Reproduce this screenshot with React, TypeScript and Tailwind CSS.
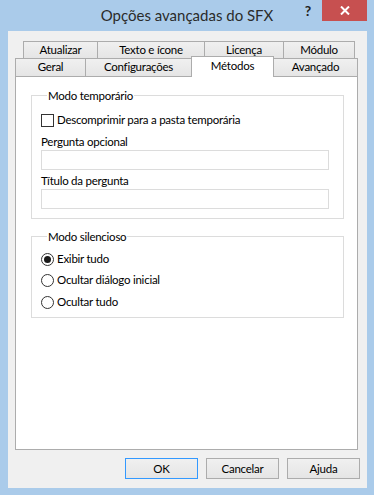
import React from 'react';

const tabBase =
  "h-full flex items-center justify-center border-t border-l border-r border-[#acacac] bg-linear-to-b from-[#f0f0f0] to-[#e5e5e5]";

function Tab({ label, w, first }: { label: string; w: string; first?: boolean }) {
  return (
    <div className={`${tabBase} ${w} ${first ? '' : '-ml-px'}`}>
      <span className="leading-none pb-px">{label}</span>
    </div>
  );
}

function Group({ title, children, className }: { title: string; children: React.ReactNode; className?: string }) {
  return (
    <div className={`border border-[#dcdcdc] ${className ?? ''}`}>
      <div className="-mt-[8px] ml-[6px] w-fit px-px bg-white leading-[16px]">{title}</div>
      {children}
    </div>
  );
}

function Radio({ label, checked, className }: { label: string; checked?: boolean; className?: string }) {
  return (
    <div className={`flex items-center h-[16px] gap-[3px] ${className ?? ''}`}>
      <span className="w-[13px] h-[13px] rounded-full border border-[#333] bg-white flex items-center justify-center">
        {checked && <span className="w-[7px] h-[7px] rounded-full bg-[#1a1a1a]" />}
      </span>
      <span>{label}</span>
    </div>
  );
}

function Btn({ label, primary }: { label: string; primary?: boolean }) {
  return (
    <div
      className={`w-[73px] h-[21px] flex items-center justify-center border bg-linear-to-b from-[#f0f0f0] to-[#e5e5e5] ${
        primary ? 'border-[#3399ff]' : 'border-[#acacac]'
      }`}
    >
      {label}
    </div>
  );
}

export default function App() {
  return (
    <div className="w-[374px] h-[495px] bg-[#aacbea] flex flex-col font-['Lato',sans-serif] text-[11.5px] tracking-[-0.25px] text-black">
      {/* title bar */}
      <div className="h-[31px] grid grid-cols-[1fr_auto_1fr]">
        <div />
        <div className="pt-[5px] text-[15px] tracking-normal leading-[20px] text-[#2b2b2b]">Opções avançadas do SFX</div>
        <div className="flex justify-end items-start pr-[7px]">
          <span className="mt-[3px] mr-[11px] text-[14px] font-bold leading-[16px] text-[#222]">?</span>
          <div className="w-[45px] h-[21px] bg-[#c75050] flex items-center justify-center">
            <svg width="10" height="9" viewBox="0 0 10 9">
              <path d="M1 0.5 L9 8.5 M9 0.5 L1 8.5" stroke="#fff" strokeWidth="2" />
            </svg>
          </div>
        </div>
      </div>

      {/* client area */}
      <div className="ml-[8px] w-[359px] h-[457px] bg-[#f0f0f0] flex flex-col">
        <div className="pt-[10px]">
          <div className="flex h-[17px] ml-[15px]">
            <Tab label="Atualizar" w="w-[75px]" first />
            <Tab label="Texto e ícone" w="w-[108px]" />
            <Tab label="Licença" w="w-[80px]" />
            <Tab label="Módulo" w="w-[72px]" />
          </div>
          <div className="flex h-[18px] ml-[7px]">
            <Tab label="Geral" w="w-[71px]" first />
            <Tab label="Configurações" w="w-[107px]" />
            <div className="relative z-10 -ml-px -mt-[2px] h-[21px] w-[83px] bg-white border-t border-l border-r border-[#acacac] flex items-start justify-center pt-[2px]">
              <span className="leading-[14px]">Métodos</span>
            </div>
            <Tab label="Avançado" w="w-[85px]" />
          </div>
        </div>

        {/* tab page */}
        <div className="ml-[7px] w-[343px] h-[374px] bg-white border border-[#acacac] pt-[18px] pl-[15px]">
          <Group title="Modo temporário" className="w-[313px] pl-[9px] pb-[9px]">
            <div className="mt-[8px] flex items-center h-[16px] gap-[3px]">
              <span className="w-[13px] h-[13px] border border-[#333] bg-white" />
              <span>Descomprimir para a pasta temporária</span>
            </div>
            <div className="mt-[6px] leading-[16px]">Pergunta opcional</div>
            <div className="w-[288px] h-[20px] border border-[#dcdcdc] bg-white" />
            <div className="mt-[3px] leading-[16px]">Título da pergunta</div>
            <div className="w-[288px] h-[20px] border border-[#dcdcdc] bg-white" />
          </Group>

          <Group title="Modo silencioso" className="mt-[17px] w-[313px] pl-[9px] pb-[7px]">
            <Radio label="Exibir tudo" checked className="mt-[6px]" />
            <Radio label="Ocultar diálogo inicial" className="mt-[5px]" />
            <Radio label="Ocultar tudo" className="mt-[6px]" />
          </Group>
        </div>

        <div className="mt-[8px] flex justify-end gap-[8px] pr-[7px]">
          <Btn label="OK" primary />
          <Btn label="Cancelar" />
          <Btn label="Ajuda" />
        </div>
      </div>
    </div>
  );
}
